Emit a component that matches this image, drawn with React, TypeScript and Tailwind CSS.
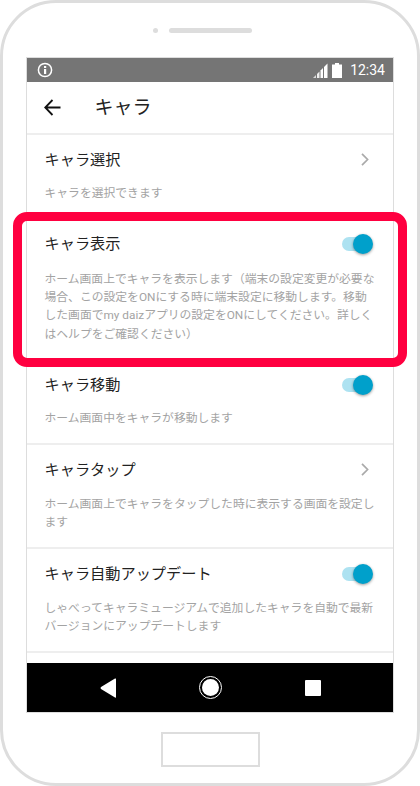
import React from "react";

const FONT = "font-['Roboto','Noto_Sans_CJK_JP',sans-serif]";

function Toggle() {
  return (
    <div className="relative w-[31px] h-5 shrink-0">
      <div className="absolute left-0 top-[3px] w-[26px] h-[14px] rounded-full bg-[#ade2f1]" />
      <div className="absolute right-0 top-0 w-5 h-5 rounded-full bg-[#00a0cb] shadow-[0_1px_3px_rgba(0,0,0,0.4)]" />
    </div>
  );
}

function Chevron() {
  return (
    <svg width="8" height="13" viewBox="0 0 8 13" className="mr-[4px] mb-[1px] shrink-0">
      <path d="M1 .8 L6.6 6.5 L1 12.2" fill="none" stroke="#aaaaaa" strokeWidth="1.7" />
    </svg>
  );
}

function Row({ title, lines, action, gap, h }: { title: string; lines: string[]; action: "toggle" | "chevron"; gap: string; h: string }) {
  return (
    <div className={`${h} shrink-0 pl-[17.5px] pr-[20px] pt-[13px] border-b-2 border-[#eeeeee]`}>
      <div className="flex items-center justify-between h-6">
        <span className="text-[15.2px] leading-6 text-[#222222] whitespace-nowrap">{title}</span>
        {action === "toggle" ? <Toggle /> : <Chevron />}
      </div>
      <div className={`${gap} text-[11.8px] leading-[18.2px] text-[#a3a3a3]`}>
        {lines.map((l) => (
          <div key={l} className="whitespace-nowrap">{l}</div>
        ))}
      </div>
    </div>
  );
}

export default function App() {
  return (
    <div className={`relative w-[420px] h-[786px] bg-white overflow-hidden ${FONT}`}>
      <div className="w-[420px] h-[786px] border-[3px] border-[#dddddd] rounded-[56px] flex flex-col items-center">
        <div className="h-[54px] shrink-0 flex items-center gap-[11px] mr-[15px]">
          <div className="w-[5px] h-[5px] rounded-full bg-[#dddddd]" />
          <div className="w-[83px] h-[5px] rounded-full bg-[#dddddd]" />
        </div>
        <div className="w-[368px] h-[656px] shrink-0 border border-[#dddddd] flex flex-col overflow-hidden">
          <div className="h-6 shrink-0 bg-[#757575] flex items-center pl-[10px] pr-[8px]">
            <svg width="16" height="16" viewBox="0 0 16 16" className="shrink-0">
              <circle cx="8" cy="8" r="6.6" fill="none" stroke="#ffffff" strokeWidth="1.5" />
              <rect x="7" y="7" width="2.2" height="5" fill="#ffffff" />
              <rect x="7" y="4" width="2.2" height="2" fill="#ffffff" />
            </svg>
            <div className="flex-1" />
            <svg width="15" height="15" viewBox="0 0 15 15" className="shrink-0">
              <path d="M0 15 L3 12 V15 Z" fill="#d8d8d8" />
              <path d="M4 11 L6.5 8.5 V15 H4 Z" fill="#eeeeee" />
              <path d="M7.5 7.5 L10 5 V15 H7.5 Z" fill="#ffffff" />
              <path d="M11 4 L14.5 0.5 V15 H11 Z" fill="#ffffff" />
            </svg>
            <svg width="10" height="15" viewBox="0 0 10 15" className="ml-[4px] shrink-0">
              <path d="M3 0 H7 V1.5 H10 V15 H0 V1.5 H3 Z" fill="#ffffff" />
            </svg>
            <span className="ml-2 text-[14px] leading-6 text-white">12:34</span>
          </div>
          <div className="h-[53px] shrink-0 border-b-2 border-[#eeeeee] flex items-center pl-[16.5px]">
            <svg width="17" height="17" viewBox="0 0 17 17" className="shrink-0 mb-[1px]">
              <path d="M16.5 8.5 H1.5 M8.5 1 L1.2 8.5 L8.5 16" fill="none" stroke="#111111" strokeWidth="1.8" />
            </svg>
            <span className="ml-[34px] text-[19px] leading-6 text-[#222222]">キャラ</span>
          </div>
          <div className="flex-1 min-h-0 flex flex-col">
            <Row h="h-[84px]" gap="mt-[12px]" title="キャラ選択" action="chevron" lines={["キャラを選択できます"]} />
            <Row
              h="h-[141px]"
              gap="mt-[14px]"
              title="キャラ表示"
              action="toggle"
              lines={[
                "ホーム画面上でキャラを表示します（端末の設定変更が必要な",
                "場合、この設定をONにする時に端末設定に移動します。移動",
                "した画面でmy daizアプリの設定をONにしてください。詳しく",
                "はヘルプをご確認ください）",
              ]}
            />
            <Row h="h-[85px]" gap="mt-[12px]" title="キャラ移動" action="toggle" lines={["ホーム画面中をキャラが移動します"]} />
            <Row
              h="h-[104px]"
              gap="mt-[13px]"
              title="キャラタップ"
              action="chevron"
              lines={["ホーム画面上でキャラをタップした時に表示する画面を設定し", "ます"]}
            />
            <Row
              h="h-[104px]"
              gap="mt-[13px]"
              title="キャラ自動アップデート"
              action="toggle"
              lines={["しゃべってキャラミュージアムで追加したキャラを自動で最新", "バージョンにアップデートします"]}
            />
          </div>
          <div className="h-[49px] shrink-0 bg-black flex items-center justify-center">
            <svg width="17" height="20" viewBox="0 0 17 20" className="shrink-0">
              <path d="M16 1 V19 Q16 20 15 19.4 L1 11 Q0 10 1 9 L15 .6 Q16 0 16 1 Z" fill="#ffffff" />
            </svg>
            <div className="ml-[82px] mr-[83px] w-[23px] h-[23px] rounded-full border border-white flex items-center justify-center shrink-0">
              <div className="w-[17px] h-[17px] rounded-full bg-white" />
            </div>
            <div className="w-4 h-4 bg-white rounded-[1px] shrink-0" />
          </div>
        </div>
        <div className="mt-[19px] w-[99px] h-[35px] shrink-0 border-2 border-[#dddddd]" />
      </div>
      <div className="absolute left-[13px] top-[212px] w-[394px] h-[155px] border-[9px] border-[#ff0040] rounded-[14px] pointer-events-none" />
    </div>
  );
}
